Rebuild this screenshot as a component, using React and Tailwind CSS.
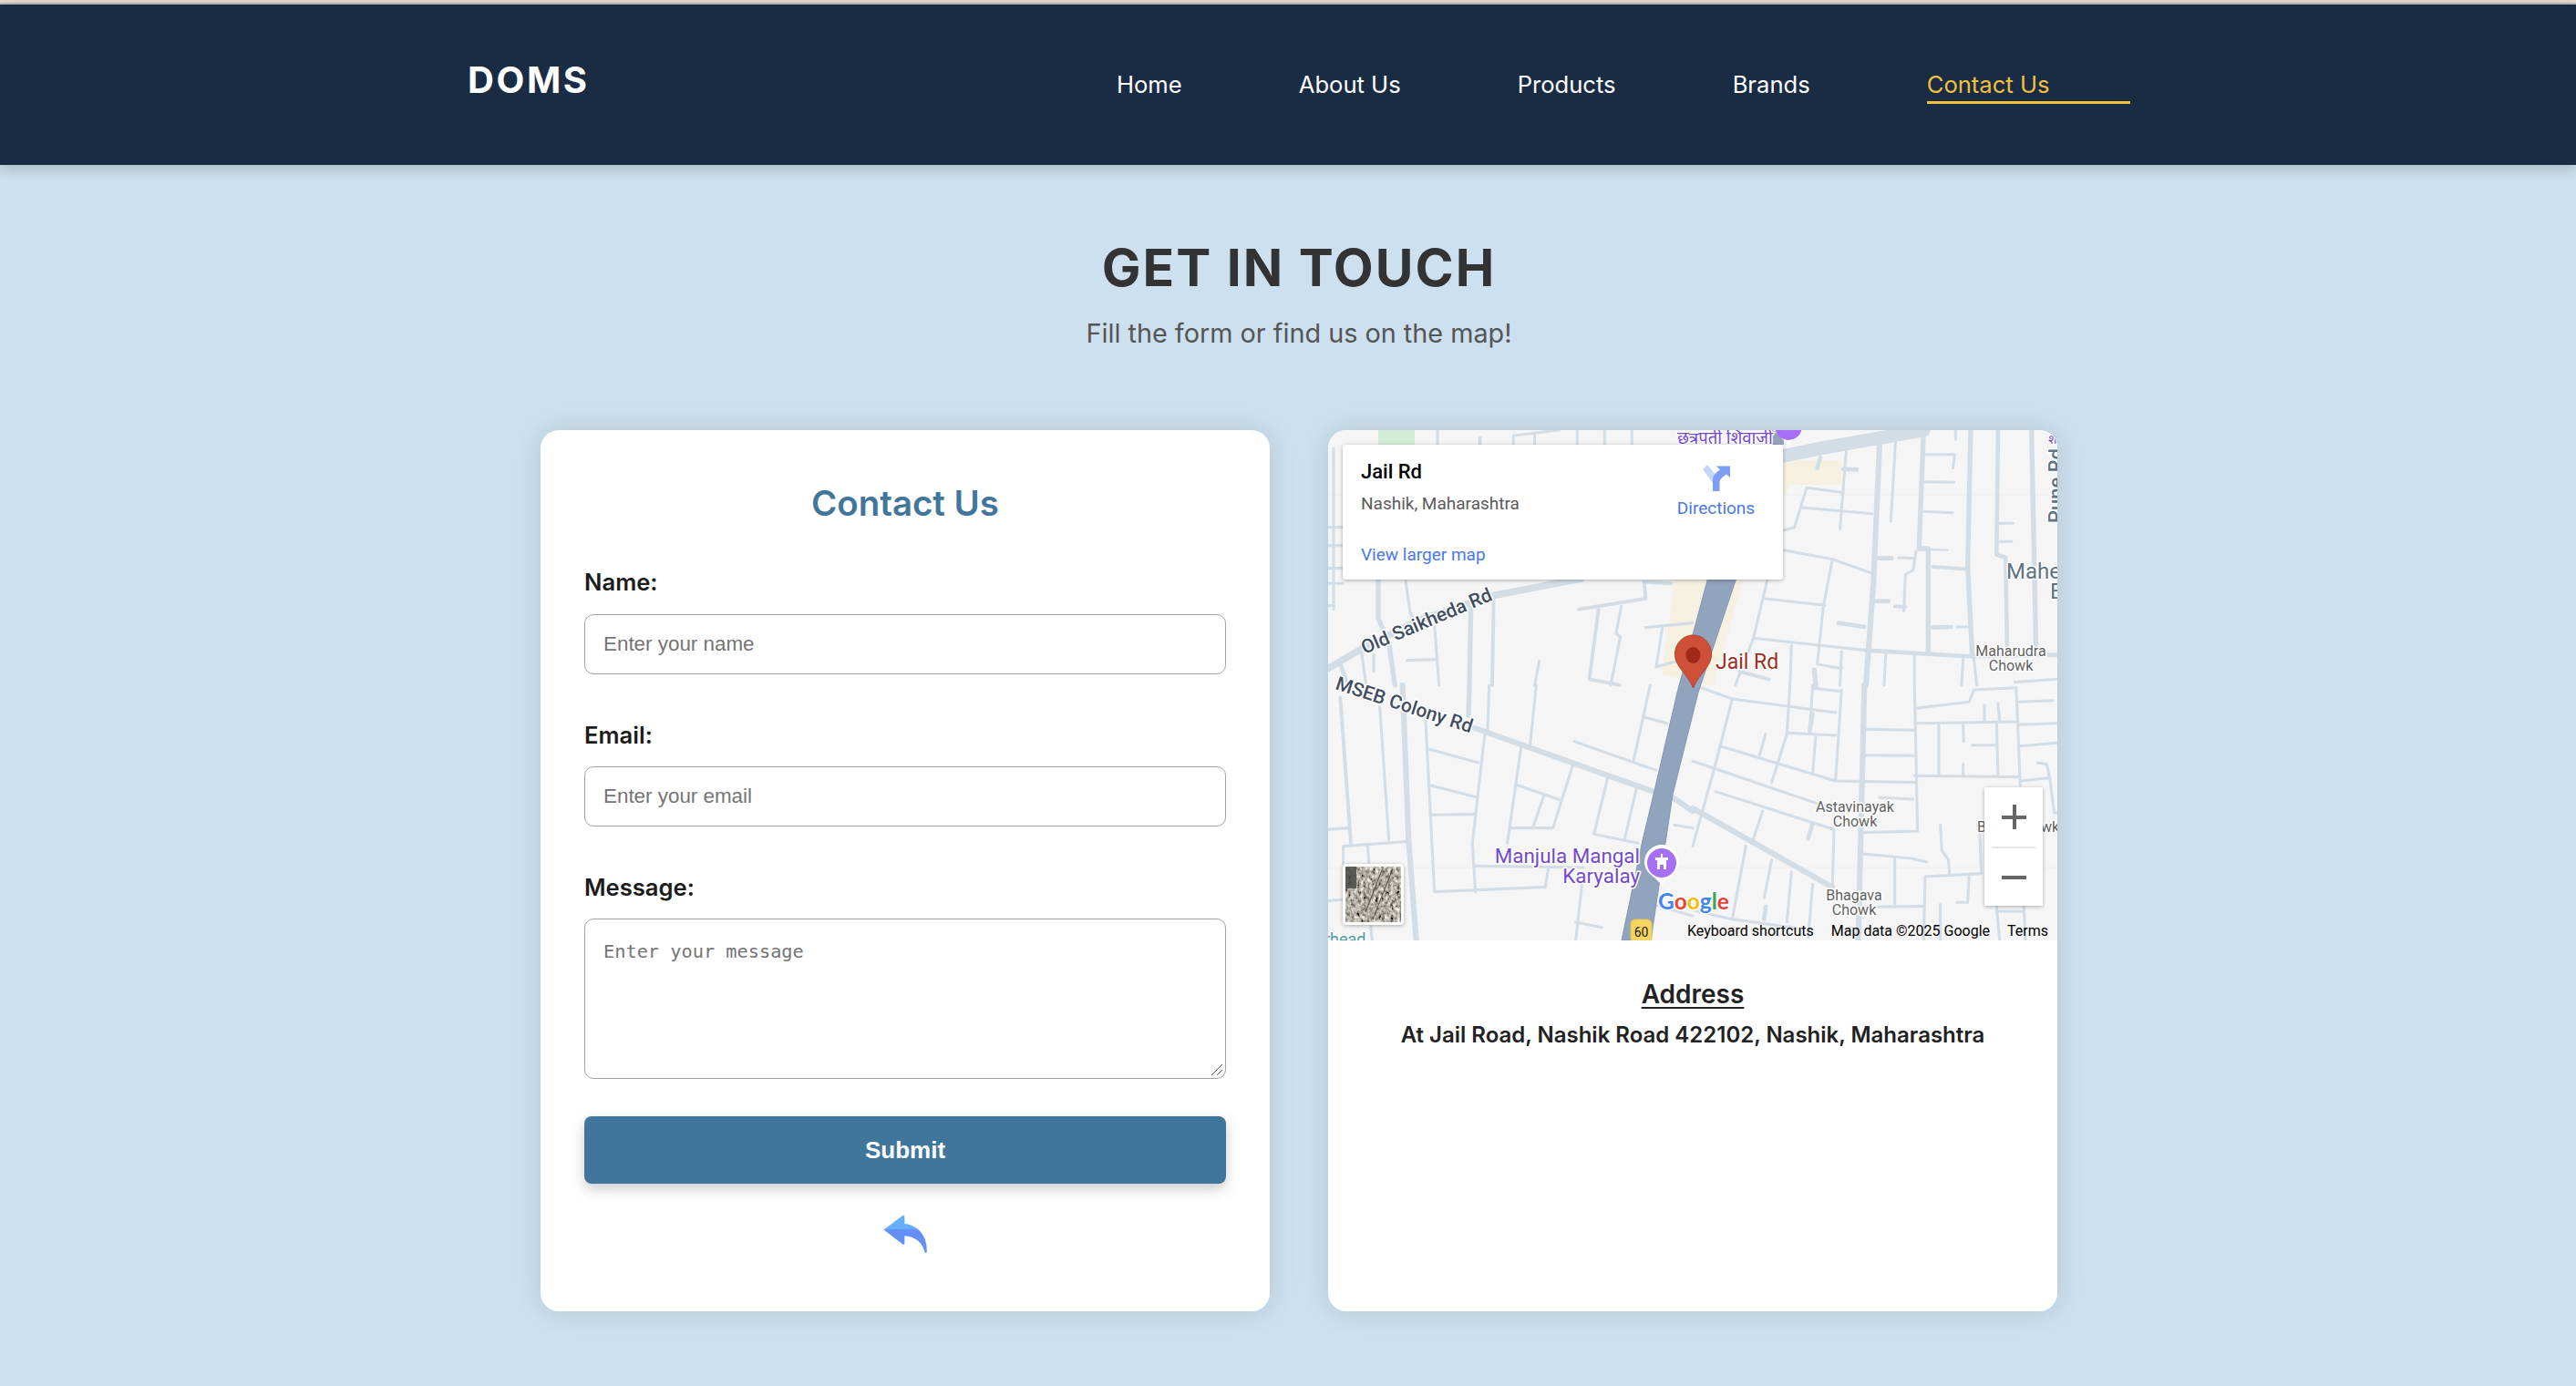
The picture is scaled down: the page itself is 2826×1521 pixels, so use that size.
import React from "react";

const INTER = "font-['Inter',sans-serif]";
const ROBOTO = "font-['Roboto',sans-serif]";

const navLinks = ["Home", "About Us", "Products", "Brands"];

// road traces, written in crop pixels (3x) per quadrant of the 800x560 map
const roadGroups = [
  {
    x: 0,
    y: 0,
    roads: [
      [8, "M18 60 18 590"],
      [8, "M0 320 48 320M0 380 48 380M0 455 48 455M0 505 48 505M0 578 20 578"],
      [8, "M360 0 360 48M610 18 610 48M680 15 680 48M820 0 820 48M910 0 910 48M1000 0 1000 48M610 18 760 0"],
      [10, "M500 25 500 48"],
      [20, "M0 785 110 720 300 625 540 545 830 490"],
      [14, "M470 590 465 840"],
      [10, "M545 560 540 840"],
      [14, "M165 495 165 620 200 700 220 840"],
      [8, "M255 495 270 600 290 640M350 640 365 840M260 758 360 755M150 740 150 795M110 730 125 840"],
      [12, "M40 770 65 840"],
      [10, "M825 590 1045 555 1040 500 1130 505"],
      [10, "M890 590 860 820 960 840"],
      [8, "M965 580 948 670 962 680 930 840M1045 650 1200 635M1100 650 1080 780 1150 760M695 760 680 840"],
    ],
  },
  {
    x: 400,
    y: 0,
    roads: [
      [38, "M300 85 420 60 620 25 760 0"],
      [12, "M420 90 410 125M495 128 540 130"],
      [8, "M505 70 485 325M668 30 652 300M865 0 865 30"],
      [16, "M615 45 595 500 570 840"],
      [14, "M760 0 745 390 775 390 775 730M915 0 905 450 920 740M1115 0 1130 720"],
      [8, "M765 80 862 80 857 125M765 170 860 172M760 268 855 272"],
      [6, "M760 393 840 395"],
      [12, "M1005 0 1000 410 1030 420 1035 720"],
      [8, "M1010 307 1055 307M1010 367 1050 367"],
      [8, "M375 190 490 205M375 190 335 320 300 330M360 255 590 275M300 395 460 425 585 470"],
      [8, "M460 425 430 580 410 770 490 785M245 495 200 685 140 840M240 555 435 577M200 685 570 725"],
      [12, "M570 725 905 745 1200 740"],
      [12, "M605 422 655 422M600 563 645 563M480 635 565 648M790 650 850 648"],
      [8, "M678 420 725 422M735 400 725 462 700 475 695 595M870 648 905 648"],
      [10, "M665 580 700 582M790 450 905 458M155 795 250 820"],
      [8, "M325 710 320 840M490 730 485 840M635 740 630 840M730 745 730 840M890 755 885 840M925 750 935 840M1060 830 1200 820"],
      [14, "M400 790 405 840"],
    ],
  },
  {
    x: 0,
    y: 280,
    roads: [
      [14, "M465 0 462 100"],
      [8, "M530 0 525 150M685 0 665 195M1060 0 1005 250M170 70 200 510"],
      [10, "M40 40 75 520"],
      [16, "M245 0 265 510 290 840M480 140 1070 350M1135 370 1200 415"],
      [8, "M320 100 350 680 700 665 715 665 725 600M515 165 475 520 485 680M635 205 590 520"],
      [8, "M810 185 1080 280M330 210 495 255M330 328 488 368M335 427 480 425M620 328 765 378M710 365 675 465"],
      [8, "M805 265 740 470 600 470M920 305 875 490 1020 520M1015 340 975 510M1040 105 1115 125"],
      [8, "M0 475 70 470M50 590 50 530 255 515M130 525 135 590M480 595 840 600M835 660 815 840M815 780 900 797"],
      [8, "M0 710 50 705M140 790 145 840M1140 460 1200 470M1065 720 1200 760"],
    ],
  },
  {
    x: 400,
    y: 280,
    roads: [
      [16, "M565 0 545 840M0 405 460 665"],
      [8, "M20 5 130 45 470 90M130 45 75 260 0 530M320 0 310 160 260 320M490 15 470 315M400 10 485 20M395 0 385 150"],
      [12, "M395 95 385 150"],
      [8, "M310 157 470 165M405 165 395 290M90 200 470 315 730 320M240 160 220 230M0 250 470 410M75 350 465 475 460 660M230 415 195 520"],
      [12, "M395 455 380 505M240 730 235 770"],
      [8, "M175 530 130 770M260 575 235 700M325 615 310 780M395 655 380 830"],
      [8, "M570 145 730 148M570 230 725 232M730 0 740 480 560 485M615 370 725 375M740 75 910 55 925 15 1065 8"],
      [8, "M740 125 1070 120M810 130 810 295M890 130 892 185M920 197 1000 197M1000 120 1005 300M730 298 1075 302M890 260 890 295M960 65 960 118M1005 60 1010 115"],
      [8, "M1065 10 1078 330M1075 55 1185 50M1075 130 1200 125M1075 200 1200 190M1078 315 1170 305M1135 255 1165 260 1175 305 1190 420 1200 420"],
      [8, "M815 460 820 545 842 575 845 620M945 490 950 620M560 555 720 570 770 582M665 570 665 730M765 630 950 620M765 630 760 840"],
      [8, "M910 625 905 715 870 715M550 730 760 728M815 720 815 840M1000 725 1010 840M1090 725 1095 840M1000 745 1090 745M0 740 130 770 340 800"],
    ],
  },
];

const halo = { paintOrder: "stroke", stroke: "#ffffff", strokeWidth: 3, strokeLinejoin: "round" };

const MapLabel = ({ x, y, size = 16, fill = "#5f5f5f", anchor = "start", weight = 400, children, rotate }) => (
  <text
    x={x}
    y={y}
    fontSize={size}
    fontWeight={weight}
    fill={fill}
    textAnchor={anchor}
    fontFamily="Roboto, sans-serif"
    transform={rotate ? `rotate(${rotate} ${x} ${y})` : undefined}
    style={halo}
  >
    {children}
  </text>
);

const MapDrawing = () => (
  <svg viewBox="0 0 800 560" className="block w-[800px] h-[560px]">
    <rect width="800" height="560" fill="#f5f5f5" />
    <rect x="55" y="0" width="40" height="16" fill="#d2edd6" />
    <path d="M500 33 563 33 563 60 507 60 455 165 422 281 366 268 380 165 440 100Z" fill="#f6f0e0" />
    <path d="M0 71H800M0 480H800" stroke="#eeeeee" strokeWidth="1" />

    {roadGroups.map((group) => (
      <g
        key={`${group.x}-${group.y}`}
        transform={`translate(${group.x} ${group.y}) scale(0.3333)`}
        fill="none"
        stroke="#d3dde6"
        strokeLinecap="round"
        strokeLinejoin="round"
      >
        {group.roads.map(([width, d]) => (
          <path key={d} d={d} strokeWidth={width * 1.15} />
        ))}
      </g>
    ))}

    {/* main road */}
    <path d="M485 0H500V16H485Z" fill="#90a4be" />
    <path d="M420 150 452 150 406 288 378 400 354 560 322 560 345 450 357 400 383 288Z" fill="#90a4be" stroke="#8297b3" strokeWidth="1" />

    {/* top poi */}
    <text x="383" y="15" fontSize="18.5" fill="#7248d0" fontFamily="'Noto Sans', 'Noto Sans Devanagari', 'Lohit Devanagari', sans-serif" style={halo}>
      छत्रपती शिवाजी
    </text>
    <path d="M488 0H522L505 16Z" fill="#ffffff" />
    <circle cx="505" cy="-4" r="15" fill="#a66ff5" />

    <MapLabel x={40} y={246} size={21} weight={500} fill="#3f4d61" rotate={-23}>
      Old Saikheda Rd
    </MapLabel>
    <MapLabel x={7} y={284} size={21} weight={500} fill="#3f4d61" rotate={18}>
      MSEB Colony Rd
    </MapLabel>
    <MapLabel x={744} y={163} size={24} fill="#5f7383">Mahesh</MapLabel>
    <MapLabel x={792} y={185} size={24} fill="#5f7383">E</MapLabel>
    <MapLabel x={749} y={248} size={16} anchor="middle">Maharudra</MapLabel>
    <MapLabel x={749} y={264} size={16} anchor="middle">Chowk</MapLabel>
    <MapLabel x={578} y={419} size={16} anchor="middle">Astavinayak</MapLabel>
    <MapLabel x={578} y={435} size={16} anchor="middle">Chowk</MapLabel>
    <MapLabel x={577} y={516} size={16} anchor="middle">Bhagava</MapLabel>
    <MapLabel x={577} y={532} size={16} anchor="middle">Chowk</MapLabel>
    <MapLabel x={712} y={441} size={16}>B</MapLabel>
    <MapLabel x={782} y={441} size={16}>wk</MapLabel>
    <MapLabel x={-4} y={565} size={18} fill="#4a9aa8">rhead</MapLabel>
    <MapLabel x={806} y={102} size={22} weight={500} fill="#5f7383" rotate={-90}>Pune Rd</MapLabel>
    <MapLabel x={790} y={15} size={14} fill="#7248d0">श</MapLabel>

    {/* poi pin */}
    <MapLabel x={342} y={475} size={22.4} fill="#7248d0" anchor="end">Manjula Mangal</MapLabel>
    <MapLabel x={342} y={497} size={22.4} fill="#7248d0" anchor="end">Karyalay</MapLabel>
    <path d="M347 474a19 19 0 1 1 38 0c0 9-7 14-12 18l-7 7-7-7c-5-4-12-9-12-18Z" fill="#ffffff" />
    <circle cx="366" cy="475" r="16" fill="#a66ff5" />
    <path d="M365 465h2v4h6v3h-2v10h-3v-5h-4v5h-3v-10h-2v-3h6Z" fill="#ffffff" />

    {/* location pin */}
    <path
      d="M400.5 225c-11 0-20 9-20 21 0 14 13 20 20 37 7-17 20-23 20-37 0-12-9-21-20-21Z"
      fill="#cf5038"
      stroke="#b8412c"
      strokeWidth="1"
    />
    <ellipse cx="400.5" cy="247" rx="8" ry="9" fill="#a0291a" />
    <MapLabel x={425} y={262} size={23} fill="#a02c1c">Jail Rd</MapLabel>

    {/* google wordmark */}
    <text x="362" y="526" fontSize="24.5" fontWeight="700" fontFamily="Lato, sans-serif" style={halo}>
      <tspan fill="#4285f4">G</tspan>
      <tspan fill="#ea4335">o</tspan>
      <tspan fill="#fbbc05">o</tspan>
      <tspan fill="#4285f4">g</tspan>
      <tspan fill="#34a853">l</tspan>
      <tspan fill="#ea4335">e</tspan>
    </text>

    {/* route shield */}
    <rect x="332" y="537" width="23" height="26" rx="5" fill="#f5d55f" stroke="#e9c54a" strokeWidth="1" />
    <text x="343.5" y="556" fontSize="14" fill="#222222" textAnchor="middle" fontFamily="Roboto, sans-serif">60</text>
  </svg>
);

const SatelliteThumb = () => (
  <svg viewBox="0 0 61 61" className="block w-full h-full">
    <filter id="satnoise" x="0" y="0" width="100%" height="100%">
      <feTurbulence type="fractalNoise" baseFrequency="0.3 0.22" numOctaves="3" seed="7" />
      <feColorMatrix values="1 1 0 0 -0.55 1 1 0 0 -0.57 0.9 0.9 0 0 -0.52 0 0 0 0 1" />
    </filter>
    <rect width="61" height="61" filter="url(#satnoise)" />
    <rect width="12" height="24" fill="#3f433e" opacity="0.8" />
    <path d="M52 2 30 58M40 4 22 50" stroke="#33342f" strokeWidth="1.2" opacity="0.7" />
  </svg>
);

const DirectionsIcon = () => (
  <svg viewBox="0 0 30 30" className="w-[30px] h-[30px]">
    <path d="M0 5 5 0 14.5 11.5 11 17 11 20Z" fill="#c4d4fb" />
    <path d="M11 29V17c0-5 3-8 8-11.5L15 1.500H30V14l-4-3.500c-4 3-7.500 5-7.500 9V29Z" fill="#7d9ef6" />
  </svg>
);

const BackArrow = () => (
  <svg viewBox="114 70 150 130" className="w-[50px] h-[43px]">
    <defs>
      <linearGradient id="backarrow" x1="0" y1="0" x2="0" y2="1">
        <stop offset="0.38" stopColor="#66aef9" />
        <stop offset="0.38" stopColor="#648ff6" />
      </linearGradient>
    </defs>
    <path
      d="M118 120 181 73Q187 70 187 78V100C232 104 263 140 261 193Q259 200 254 195C248 165 225 142 187 140V164Q187 172 181 168Z"
      fill="url(#backarrow)"
    />
  </svg>
);

const fieldClass =
  "block w-full h-[66px] px-[20px] border border-[#a3a3a3] rounded-[10px] bg-white text-[22.4px] font-['Liberation_Sans',sans-serif] placeholder:text-[#757575] outline-none";

const labelClass = `block h-[32px] text-[25.6px] leading-[32px] font-semibold text-[#1c1c1c] ${INTER}`;

const App = () => {
  return (
    <div className="min-h-screen bg-[#cde0ef]">
      <div className="h-[3px] bg-[#e9dace]" />
      <div className="h-[2px] bg-[#b8bcc0]" />

      <header className="relative h-[176px] bg-[#1a2b44] shadow-[0_4px_15px_rgba(0,0,0,0.2)] pl-[513px] flex items-start">
        <div className={`mt-[59px] w-[712px] text-[40px] leading-[48px] font-bold tracking-[2.6px] text-white ${INTER}`}>
          DOMS
        </div>
        <nav className={`mt-[72px] flex gap-[128px] text-[25.6px] leading-[32px] font-normal ${INTER}`}>
          {navLinks.map((link) => (
            <a key={link} className="text-white">
              {link}
            </a>
          ))}
          <a className="w-[223px] pb-[2px] border-b-[3px] border-[#f0c040] text-[#f0c040]">Contact Us</a>
        </nav>
      </header>

      <main className="pl-[24px] flex flex-col items-center">
        <h1 className={`mt-[78px] text-[57px] leading-[70px] font-bold tracking-[2px] text-[#333333] ${INTER}`}>
          GET IN TOUCH
        </h1>
        <p className={`mt-[19px] text-[28.8px] leading-[36px] text-[#555555] ${INTER}`}>
          Fill the form or find us on the map!
        </p>

        <div className="mt-[88px] mb-[82px] w-[1664px] grid grid-cols-2 gap-[64px]">
          <section className="bg-white rounded-[20px] shadow-[0_0_30px_rgba(0,0,0,0.12)] px-[48px] pt-[56px] pb-[63px]">
            <h2 className={`text-center text-[38.4px] leading-[48px] font-semibold text-[#40769c] ${INTER}`}>
              Contact Us
            </h2>
            <form>
              <label className={`${labelClass} mt-[47px]`}>Name:</label>
              <input className={`${fieldClass} mt-[19px]`} placeholder="Enter your name" />
              <label className={`${labelClass} mt-[51px]`}>Email:</label>
              <input className={`${fieldClass} mt-[18px]`} placeholder="Enter your email" />
              <label className={`${labelClass} mt-[51px]`}>Message:</label>
              <div className="relative mt-[18px]">
                <textarea
                  className="block w-full h-[176px] px-[20px] py-[22px] border border-[#a3a3a3] rounded-[10px] bg-white text-[20.3px] leading-[26px] font-['DejaVu_Sans_Mono',monospace] placeholder:text-[#757575] outline-none resize-none"
                  placeholder="Enter your message"
                />
                <svg viewBox="0 0 14 14" className="absolute right-[3px] bottom-[3px] w-[14px] h-[14px]">
                  <path d="M13 1 1 13M13 7 7 13" stroke="#555555" strokeWidth="1" fill="none" />
                </svg>
              </div>
              <button
                type="button"
                className="block mt-[41px] w-full h-[74px] rounded-[8px] bg-[#40769c] text-white text-[26px] font-bold font-['Liberation_Sans',sans-serif] shadow-[0_6px_15px_rgba(0,0,0,0.2)]"
              >
                Submit
              </button>
            </form>
            <div className="mt-[34px] flex justify-center">
              <BackArrow />
            </div>
          </section>

          <section className="bg-white rounded-[20px] shadow-[0_0_30px_rgba(0,0,0,0.12)] overflow-hidden">
            <div className="relative h-[560px]">
              <MapDrawing />

              <div className={`absolute left-[16px] top-[16px] w-[483px] h-[148px] bg-white rounded-[3px] shadow-[0_1px_4px_rgba(0,0,0,0.3)] ${ROBOTO}`}>
                <div className="absolute left-[20px] top-[16px] text-[22px] leading-[28px] font-medium text-black">Jail Rd</div>
                <div className="absolute left-[20px] top-[53px] text-[19px] leading-[24px] text-[#5b5b5b]">Nashik, Maharashtra</div>
                <div className="absolute left-[20px] top-[109px] text-[19px] leading-[24px] text-[#4a78e8]">View larger map</div>
                <div className="absolute left-[367px] top-[22px] w-[85px] flex flex-col items-center">
                  <DirectionsIcon />
                  <span className="mt-[6px] text-[19px] leading-[24px] text-[#4a78e8]">Directions</span>
                </div>
              </div>

              <div className="absolute left-[16px] top-[476px] w-[67px] h-[67px] border-[3px] border-white rounded-[4px] shadow-[0_1px_4px_rgba(0,0,0,0.3)] overflow-hidden">
                <SatelliteThumb />
              </div>

              <div className="absolute left-[720px] top-[392px] w-[64px] h-[130px] bg-white shadow-[0_1px_4px_rgba(0,0,0,0.3)] flex flex-col items-center">
                <div className="h-[65px] w-full flex items-center justify-center">
                  <div className="relative w-[27px] h-[27px]">
                    <div className="absolute left-0 top-[12px] w-[27px] h-[4px] bg-[#666666]" />
                    <div className="absolute left-[12px] top-0 w-[4px] h-[27px] bg-[#666666]" />
                  </div>
                </div>
                <div className="h-[2px] w-[48px] bg-[#e6e6e6]" />
                <div className="flex-1 w-full flex items-center justify-center">
                  <div className="w-[27px] h-[4px] bg-[#666666]" />
                </div>
              </div>

              <div className={`absolute right-[10px] bottom-[0px] h-[20px] flex gap-[19px] text-[16px] leading-[20px] text-black ${ROBOTO}`}>
                <span>Keyboard shortcuts</span>
                <span>Map data ©2025 Google</span>
                <span>Terms</span>
              </div>
            </div>

            <div className={`text-center ${INTER}`}>
              <h3 className="mt-[42px] text-[28px] leading-[34px] font-semibold underline underline-offset-[4px] text-[#222222]">
                Address
              </h3>
              <p className="mt-[13px] text-[24px] leading-[30px] font-semibold text-[#222222]">
                At Jail Road, Nashik Road 422102, Nashik, Maharashtra
              </p>
            </div>
          </section>
        </div>
      </main>
    </div>
  );
};

export default App;
